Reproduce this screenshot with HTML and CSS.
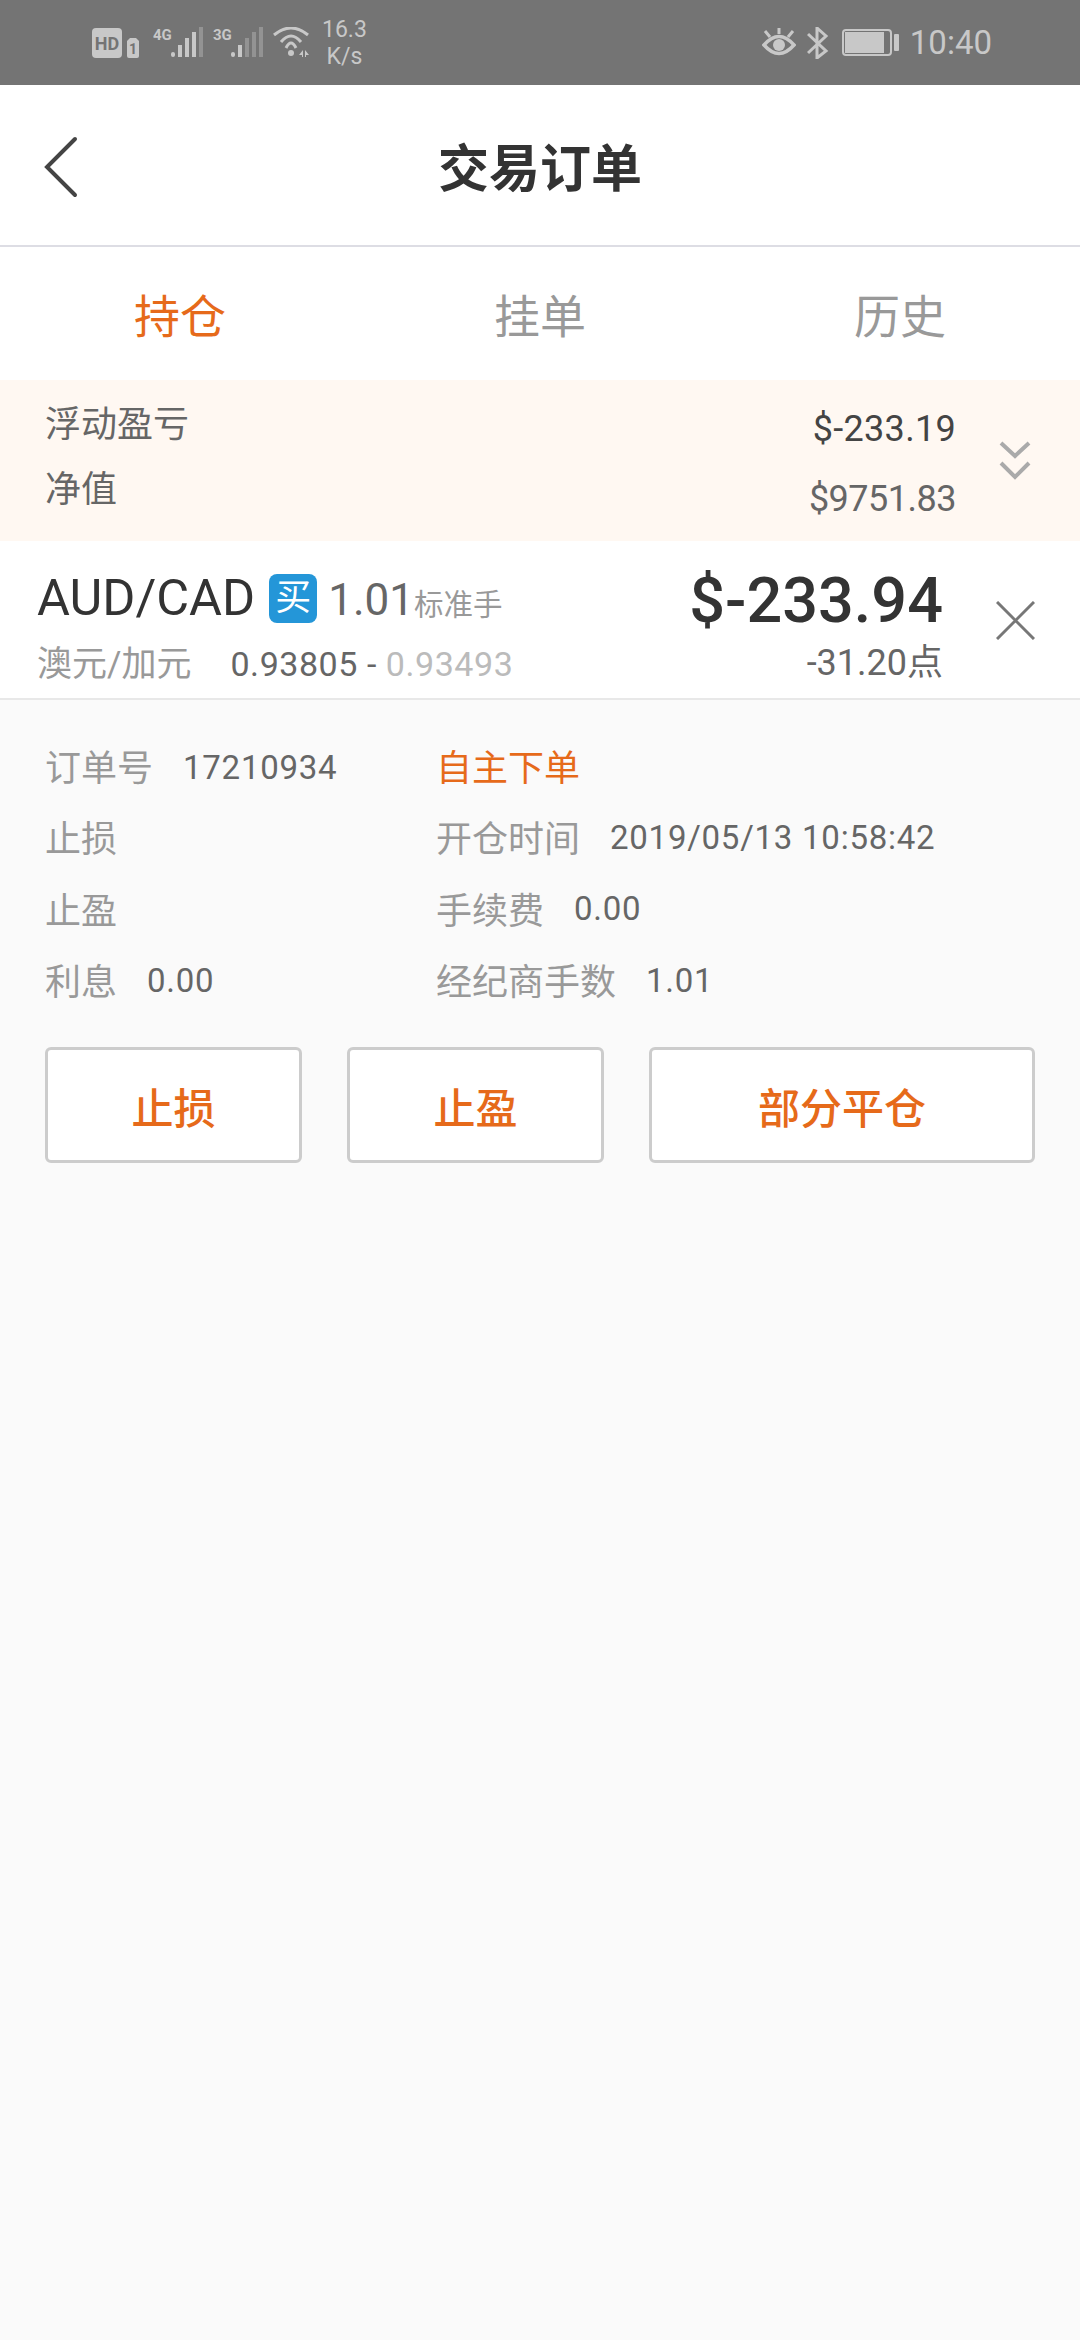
FILE: index.html
```html
<!DOCTYPE html>
<html lang="zh-CN">
<head>
    <meta charset="UTF-8">
    <meta name="viewport" content="width=device-width, initial-scale=1.0">
    <title>交易订单</title>
    <link rel="stylesheet" href="styles.css">
</head>
<body>
    <div class="status-bar">
        <div class="status-left">
            <svg class="ic-hd" width="48" height="30" viewBox="0 0 48 30">
                <rect x="0" y="0" width="30" height="30" rx="4" fill="#c8c8c8"/>
                <text x="15" y="22" text-anchor="middle" class="hd-text">HD</text>
                <path d="M38 10h6l3 3v15a2 2 0 0 1-2 2h-8a2 2 0 0 1-2-2V13z" fill="#c8c8c8"/>
                <text x="41" y="26" text-anchor="middle" class="sim-text">1</text>
            </svg>
            <svg class="ic-signal" width="50" height="32" viewBox="0 0 50 32">
                <text x="0" y="13" class="net-text">4G</text>
                <rect x="18" y="25" width="4" height="5" rx="2" fill="#c8c8c8"/>
                <rect x="25" y="18" width="4" height="12" fill="#c8c8c8"/>
                <rect x="32" y="11" width="4" height="19" fill="#c8c8c8"/>
                <rect x="39" y="5" width="4" height="25" fill="#c8c8c8"/>
                <rect x="46" y="0" width="4" height="30" fill="#939393"/>
            </svg>
            <svg class="ic-signal" width="50" height="32" viewBox="0 0 50 32">
                <text x="0" y="13" class="net-text">3G</text>
                <rect x="18" y="25" width="4" height="5" rx="2" fill="#c8c8c8"/>
                <rect x="25" y="18" width="4" height="12" fill="#c8c8c8"/>
                <rect x="32" y="11" width="4" height="19" fill="#939393"/>
                <rect x="39" y="5" width="4" height="25" fill="#939393"/>
                <rect x="46" y="0" width="4" height="30" fill="#939393"/>
            </svg>
            <svg class="ic-wifi" width="38" height="32" viewBox="0 0 38 32">
                <path d="M1 8Q18 -6 35 8" fill="none" stroke="#c8c8c8" stroke-width="3"/>
                <path d="M8 15Q18 3 28 15" fill="none" stroke="#c8c8c8" stroke-width="3"/>
                <path d="M13 21Q18 11 23 21" fill="none" stroke="#c8c8c8" stroke-width="3"/>
                <circle cx="18" cy="26" r="3" fill="#c8c8c8"/>
                <path d="M30 23v7h-1v-2h-3zM32 23v7h1v-2h3z" fill="#c8c8c8"/>
            </svg>
            <div class="net-speed"><span>16.3</span><span>K/s</span></div>
        </div>
        <div class="status-right">
            <svg width="34" height="30" viewBox="0 0 34 30">
                <path d="M2 17Q17 0 32 17Q17 34 2 17Z" fill="none" stroke="#c8c8c8" stroke-width="3.5"/>
                <circle cx="17" cy="17" r="6" fill="#c8c8c8"/>
                <path d="M17 0v6M3 3l5 6M31 3l-5 6" stroke="#c8c8c8" stroke-width="3" fill="none"/>
            </svg>
            <svg class="ic-bt" width="22" height="32" viewBox="0 0 22 32">
                <path d="M1 7L19 24L10 31V1L19 9L1 26" fill="none" stroke="#c8c8c8" stroke-width="3"/>
            </svg>
            <div class="battery"><div class="battery-body"><div class="battery-fill"></div></div><div class="battery-nub"></div></div>
            <span class="clock">10:40</span>
        </div>
    </div>

    <header class="title-bar">
        <svg class="back" width="36" height="62" viewBox="0 0 36 62">
            <path d="M32 3L4 31L32 59" fill="none" stroke="#444" stroke-width="4" stroke-linecap="round"/>
        </svg>
        <h1>交易订单</h1>
    </header>

    <nav class="tabs">
        <div class="tab active">持仓</div>
        <div class="tab">挂单</div>
        <div class="tab">历史</div>
    </nav>

    <section class="summary">
        <div class="summary-labels">
            <div>浮动盈亏</div>
            <div>净值</div>
        </div>
        <div class="summary-values">
            <div class="float-val">$-233.19</div>
            <div class="net-val">$9751.83</div>
        </div>
        <svg class="chevrons" width="32" height="40" viewBox="0 0 32 40">
            <path d="M2 2L16 15L30 2M2 22L16 36L30 22" fill="none" stroke="#aaa" stroke-width="4"/>
        </svg>
    </section>

    <section class="order">
        <div class="order-main">
            <div class="order-line">
                <span class="pair">AUD/CAD</span>
                <span class="badge">买</span>
                <span class="lots">1.01</span>
                <span class="lots-unit">标准手</span>
            </div>
            <div class="order-line second">
                <span class="pair-cn">澳元/加元</span>
                <span class="prices">0.93805 - <span class="price-now">0.93493</span></span>
            </div>
        </div>
        <div class="order-pl">
            <div class="pl-money">$-233.94</div>
            <div class="pl-points">-31.20点</div>
        </div>
        <svg class="close" width="39" height="39" viewBox="0 0 39 39">
            <path d="M1 1L38 38M38 1L1 38" fill="none" stroke="#777" stroke-width="3"/>
        </svg>
    </section>

    <section class="detail">
        <div class="detail-grid">
            <div class="item"><label>订单号</label><span class="order-no">17210934</span></div>
            <div class="item"><em>自主下单</em></div>
            <div class="item"><label>止损</label></div>
            <div class="item"><label>开仓时间</label><span>2019/05/13 10:58:42</span></div>
            <div class="item"><label>止盈</label></div>
            <div class="item"><label>手续费</label><span>0.00</span></div>
            <div class="item"><label>利息</label><span>0.00</span></div>
            <div class="item"><label>经纪商手数</label><span>1.01</span></div>
        </div>
        <div class="actions">
            <button class="btn">止损</button>
            <button class="btn">止盈</button>
            <button class="btn wide">部分平仓</button>
        </div>
    </section>
</body>
</html>
```

FILE: styles.css
```css
* {
    box-sizing: border-box;
}

html, body {
    margin: 0;
    height: 100%;
}

body {
    font-family: Roboto, "Noto Sans CJK SC", sans-serif;
    background-color: #fafafa;
    color: #333;
    display: flex;
    flex-direction: column;
}

/* status bar */
.status-bar {
    height: 85px;
    background-color: #747474;
    color: #c8c8c8;
    display: flex;
    justify-content: space-between;
    align-items: center;
    padding: 0 88px 0 92px;
}

.status-left, .status-right {
    display: flex;
    align-items: center;
}

.ic-hd {
    margin-right: 13px;
}

.hd-text {
    font: 700 18px Roboto, sans-serif;
    fill: #747474;
}

.sim-text {
    font: 700 14px Roboto, sans-serif;
    fill: #747474;
}

.net-text {
    font: 700 15px Roboto, sans-serif;
    fill: #c8c8c8;
}

.ic-signal {
    margin-right: 10px;
}

.net-speed {
    display: flex;
    flex-direction: column;
    align-items: center;
    margin-left: 11px;
    font-size: 23px;
    line-height: 27px;
}

.ic-bt {
    margin: 0 13px 0 11px;
}

.battery {
    display: flex;
    align-items: center;
}

.battery-body {
    width: 50px;
    height: 27px;
    border: 2px solid #c8c8c8;
    border-radius: 4px;
    padding: 1px;
}

.battery-fill {
    width: 39px;
    height: 100%;
    background-color: #c8c8c8;
}

.battery-nub {
    width: 5px;
    height: 17px;
    margin-left: 2px;
    background-color: #c8c8c8;
    border-radius: 1px;
}

.clock {
    margin-left: 11px;
    font-size: 33px;
}

/* title */
.title-bar {
    height: 162px;
    background-color: #fff;
    border-bottom: 2px solid #dddde4;
    display: flex;
    align-items: center;
    justify-content: center;
    position: relative;
}

.title-bar h1 {
    margin: 0;
    font-size: 51px;
    font-weight: 700;
    color: #333;
}

.back {
    position: absolute;
    left: 43px;
    top: 51px;
}

/* tabs */
.tabs {
    height: 133px;
    background-color: #fff;
    display: grid;
    grid-template-columns: repeat(3, 1fr);
}

.tab {
    display: flex;
    align-items: center;
    justify-content: center;
    padding-bottom: 2px;
    font-size: 46px;
    color: #999;
}

.tab.active {
    color: #e66a1a;
}

/* summary */
.summary {
    height: 161px;
    background-color: #fff8f2;
    display: flex;
    align-items: center;
    padding: 0 49px 0 45px;
}

.summary-labels {
    flex: 1;
    font-size: 36px;
    line-height: 65px;
    color: #666;
    margin-top: -5px;
}

.summary-values {
    font-size: 36px;
    letter-spacing: 0.3px;
    line-height: 70px;
    text-align: right;
    color: #666;
    margin: 6px 43px 0 0;
}

.float-val {
    color: #444;
}

.net-val {
    letter-spacing: -0.5px;
}

.chevrons {
    display: block;
}

/* order row */
.order {
    height: 159px;
    background-color: #fff;
    border-bottom: 2px solid #e8e8e8;
    display: flex;
    align-items: flex-start;
    padding: 27px 45px 0 37px;
}

.order-main {
    flex: 1;
}

.order-line {
    display: flex;
    align-items: baseline;
    height: 60px;
    line-height: 60px;
}

.pair {
    font-size: 50.5px;
    color: #333;
}

.badge {
    width: 48px;
    height: 49px;
    margin: 0 11px 0 14px;
    border-radius: 8px;
    background-color: #2496d8;
    color: #fff;
    font-size: 36px;
    line-height: 49px;
    text-align: center;
    align-self: center;
}

.lots {
    font-size: 44px;
    color: #666;
}

.lots-unit {
    font-size: 29.5px;
    color: #999;
}

.order-line.second {
    margin-top: 11px;
    height: 50px;
    line-height: 50px;
}

.pair-cn {
    font-size: 35px;
    color: #999;
}

.prices {
    margin-left: 39px;
    font-size: 34px;
    letter-spacing: 0.55px;
    color: #666;
}

.price-now {
    color: #bbb;
}

.order-pl {
    text-align: right;
    margin-right: 53px;
}

.pl-money {
    font-size: 63px;
    font-weight: 500;
    line-height: 66px;
    color: #333;
}

.pl-points {
    margin-top: 4px;
    font-size: 36px;
    line-height: 50px;
    color: #666;
}

.close {
    display: block;
    margin-top: 33px;
}

/* detail */
.detail {
    flex: 1;
    padding: 29px 45px 0 45px;
}

.detail-grid {
    display: grid;
    grid-template-columns: 391px 1fr;
    grid-auto-rows: 71.5px;
}

.item {
    display: flex;
    align-items: center;
    font-size: 33px;
    letter-spacing: 0.75px;
    color: #666;
}

.item span {
    margin-top: 2px;
}

.item .order-no {
    margin-top: 6px;
}

.item label {
    font-size: 36px;
    letter-spacing: 0;
    color: #999;
    margin-right: 30px;
}

.item em {
    font-style: normal;
    font-size: 36px;
    letter-spacing: 0;
    color: #e66a1a;
}

.actions {
    display: grid;
    grid-template-columns: 257px 257px 386px;
    column-gap: 45px;
    margin-top: 32px;
}

.btn {
    height: 116px;
    background-color: #fff;
    border: 3px solid #ccc;
    border-radius: 6px;
    color: #e66a1a;
    font-family: inherit;
    font-size: 42px;
    font-weight: 500;
}
```
